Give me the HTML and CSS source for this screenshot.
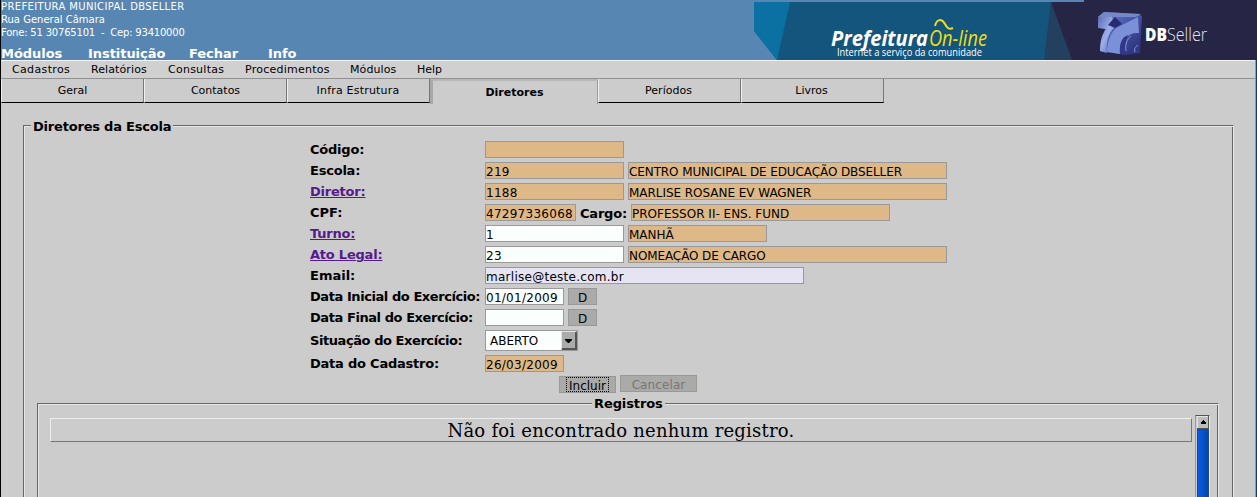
FILE: index.html
```html
<!DOCTYPE html>
<html lang="pt-BR">
<head>
<meta charset="utf-8">
<title>Diretores da Escola</title>
<link rel="stylesheet" href="styles.css">
</head>
<body>
<div class="page">
<header class="header">
  <div class="head-left">
    <div class="address"><div class="city">PREFEITURA MUNICIPAL DBSELLER</div><div class="rua">Rua General Câmara</div><div class="fone">Fone: 51 30765101 &nbsp;- &nbsp;Cep: 93410000</div></div>
    <nav class="main-nav"><span class="n1">Módulos</span><span class="n2">Instituição</span><span class="n3">Fechar</span><span class="n4">Info</span></nav>
  </div>
  <svg class="banner" width="503" height="60" viewBox="0 0 503 60">
    <defs>
      <linearGradient id="cube" x1="0" y1="0" x2="1" y2="1"><stop offset="0" stop-color="#6f7fc4"/><stop offset=".45" stop-color="#4759ad"/><stop offset="1" stop-color="#27296e"/></linearGradient>
      <linearGradient id="arm" x1="0" y1="0" x2="1" y2="1"><stop offset="0" stop-color="#5c6db8"/><stop offset=".5" stop-color="#9cafe8"/><stop offset="1" stop-color="#4458b4"/></linearGradient>
    </defs>
    <path fill="#14557d" d="M0 2H330V0H503V60H23L0 31Z"/>
    <path fill="#0b71a2" d="M0 2H36L23 60L0 31Z"/>
    <path fill="#24405f" d="M297 2L290 60H318Z"/>
    <path fill="#272546" d="M297 2H330V0H503V60H318Z"/>
    <text class="pref" x="77" y="46" textLength="97" lengthAdjust="spacingAndGlyphs">Prefeitura</text>
    <text class="online" x="175" y="46" textLength="58" lengthAdjust="spacingAndGlyphs">On-line</text>
    <path d="M181 26C183 18 188 19 191 24C193 28 195 30 199 28" fill="none" stroke="#f0df12" stroke-width="2"/>
    <text class="slogan" x="83" y="56" textLength="145" lengthAdjust="spacingAndGlyphs">Internet a serviço da comunidade</text>
    <path fill="url(#cube)" d="M344 17L350 12L384 14L388 16L386 53L372 55L346 51L351 29L344 27Z"/>
    <path fill="#7686c6" d="M350 12L387 14L382 17L344 17Z"/>
    <path fill="url(#arm)" d="M344 17H358L361 27C354 33 352 43 353 53L346 51C346 41 348 34 352 29L344 28Z"/>
    <path fill="#7c90d8" d="M368 25L384 17L385 33C374 32 367 40 366 54L353 52C353 42 356 34 362 28Z"/>
    <path fill="#282b70" d="M361 17L368 24L361 28L354 25Z"/>
    <path fill="#31388a" d="M366 54C365 43 368 37 374 35C372 40 371 45 372 55ZM377 54C377 49 380 44 385 43L386 53Z"/>
    <path d="M372 51C371 44 373 39 377 36M381 52C380 49 381 47 384 45" fill="none" stroke="#8799dc" stroke-width="1"/>
    <text class="db" x="391" y="41" textLength="22" lengthAdjust="spacingAndGlyphs">DB</text>
    <text class="seller" x="413" y="41" textLength="40" lengthAdjust="spacingAndGlyphs">Seller</text>
  </svg>
</header>
<nav class="menu"><span class="m1">Cadastros</span><span class="m2">Relatórios</span><span class="m3">Consultas</span><span class="m4">Procedimentos</span><span class="m5">Módulos</span><span class="m6">Help</span></nav>
<nav class="tabs"><a class="tab">Geral</a><a class="tab">Contatos</a><a class="tab infra">Infra Estrutura</a><a class="tab active">Diretores</a><a class="tab shift">Períodos</a><a class="tab shift">Livros</a></nav>
<section class="panel">
  <h2 class="legend main-legend">Diretores da Escola</h2>
  <div class="form">
    <div class="row"><b class="label">Código:</b><span class="field w139"></span></div>
    <div class="row"><b class="label">Escola:</b><span class="field w139 num">219</span><span class="field w319 escola">CENTRO MUNICIPAL DE EDUCAÇÃO DBSELLER</span></div>
    <div class="row"><b class="label"><a>Diretor:</a></b><span class="field w139 num">1188</span><span class="field w319 upper">MARLISE ROSANE EV WAGNER</span></div>
    <div class="row"><b class="label plain">CPF:</b><span class="field w91 num">47297336068</span><b class="cargo">Cargo:</b><span class="field w259">PROFESSOR II- ENS. FUND</span></div>
    <div class="row"><b class="label"><a>Turno:</a></b><span class="field w139 white num">1</span><span class="field w139">MANHÃ</span></div>
    <div class="row"><b class="label"><a>Ato Legal:</a></b><span class="field w139 white num">23</span><span class="field w319 escola">NOMEAÇÃO DE CARGO</span></div>
    <div class="row"><b class="label plain">Email:</b><span class="field w319 lilac num">marlise@teste.com.br</span></div>
    <div class="row"><b class="label tight">Data Inicial do Exercício:</b><span class="field w79 white num">01/01/2009</span><span class="btn day">D</span></div>
    <div class="row"><b class="label tight">Data Final do Exercício:</b><span class="field w79 white"></span><span class="btn day">D</span></div>
    <div class="row tall"><b class="label tight">Situação do Exercício:</b><span class="select"><span>ABERTO</span><svg width="16" height="19" viewBox="0 0 16 19"><path fill="#ababab" d="M0 0H16V19H0Z"/><path fill="#e5e5e5" d="M0 0H15V1H1V18H0Z"/><path fill="#555" d="M14 1H16V19H1V17H14Z"/><path d="M4 8H11V9L8 12H7L4 9Z"/></svg></span></div>
    <div class="row"><b class="label">Data do Cadastro:</b><span class="field w79 num">26/03/2009</span></div>
  </div>
  <div class="actions"><span class="btn include"><span>Incluir</span></span><span class="btn cancel">Cancelar</span></div>
  <section class="records">
    <h3 class="legend">Registros</h3>
    <div class="list"><div class="empty">Não foi encontrado nenhum registro.</div><div class="scroll"><svg width="12" height="13" viewBox="0 0 12 13"><path fill="#555" d="M0 0H12V13H0Z"/><path fill="#e2e2e2" d="M0 0H11V12H0Z"/><path fill="#bdbdbd" d="M1 1H11V12H1Z"/><path d="M6 4H7V5H8V6H9V8H4V6H5V5H6Z"/></svg><div class="thumb"></div></div></div>
  </section>
</section>
<div class="edge"></div>
</div>
</body>
</html>
```
FILE: styles.css
```css
* { box-sizing: border-box; }
body { margin: 0; overflow: hidden; background: #ccc; color: #000; font: 13px "DejaVu Sans", sans-serif; }
.page { position: relative; height: 497px; overflow: hidden; border-left: 1px solid #000; }
.header { display: flex; justify-content: space-between; height: 60px; margin-left: -1px; background: #5886b3; color: #fff; }
.head-left { width: 400px; padding-left: 1px; white-space: nowrap; }
.address { height: 46px; font-size: 10px; line-height: 13px; }
.city { letter-spacing: .36px; }
.fone { letter-spacing: -.2px; }
.main-nav { display: flex; font-size: 13px; font-weight: bold; line-height: 15px; }
.n1 { width: 87px; }
.n2 { width: 101px; }
.n3 { width: 79px; }
.n1, .n2, .n3, .n4 { letter-spacing: -.05px; }
.banner { display: block; }
.pref { font: italic bold 21px "Open Sans", sans-serif; fill: #fff; }
.online { font: italic 21px "Open Sans", sans-serif; fill: #f0df12; }
.slogan { font: 10px "Open Sans", sans-serif; fill: #fff; }
.db { font: 800 18px "Open Sans", sans-serif; fill: #fff; }
.seller { font: 300 18px "Open Sans", sans-serif; fill: #e6e6f2; }
.menu { display: flex; height: 19px; padding-left: 11px; background: #d0d0d0; border-top: 1px solid #f4f4f4; border-bottom: 1px solid #909090; font-size: 11px; line-height: 17px; white-space: nowrap; }
.m1 { width: 79px; letter-spacing: .35px; }
.m2 { width: 77px; letter-spacing: .1px; }
.m3 { width: 77px; letter-spacing: .25px; }
.m4 { width: 105px; letter-spacing: .25px; }
.m5 { width: 67px; letter-spacing: .1px; }
.tabs { display: flex; height: 25px; font-size: 11px; line-height: 23px; text-align: center; }
.tab { width: 143px; height: 24px; border-left: 1px solid #f0f0f0; border-right: 1px solid #777; border-bottom: 1px solid #000; }
.infra { padding-right: 1px; letter-spacing: .2px; }
.shift { padding-right: 2px; }
.tab.active { width: 168px; height: 25px; padding-right: 1px; border-left: 3px solid #a8a8a8; border-right: 1px solid #999; border-top: 2px solid #b7b7b7; border-bottom: 0; font-weight: bold; }
.panel { position: relative; width: 1211px; height: 400px; margin: 21px 0 0 22px; padding-top: 14px; border: 1px solid #666; border-right-color: #e6e6e6; box-shadow: inset 1px 1px #e6e6e6, inset -1px 0 #666; }
.legend { position: absolute; top: -8px; left: 8px; margin: 0; padding: 0 2px; background: #ccc; font-size: 13px; line-height: 18px; letter-spacing: -.1px; white-space: nowrap; }
.main-legend { left: 7px; letter-spacing: -.2px; }
.form { padding-left: 286px; }
.row { display: flex; gap: 4px; height: 21px; white-space: nowrap; }
.row.tall { height: 25px; }
.label { flex: 0 0 171px; min-width: 0; line-height: 20px; font-size: 13px; letter-spacing: -.22px; }
.label.plain { letter-spacing: 0; }
.label.tight { letter-spacing: -.43px; }
.tall .label { line-height: 23px; }
.label a { color: #551a8b; text-decoration: underline; }
.field { flex: none; height: 17px; margin-top: 1px; border: 1px solid #999; background: #deb887; font-size: 12px; line-height: 19px; white-space: nowrap; overflow: hidden; }
.num { letter-spacing: .27px; }
.escola { letter-spacing: -.1px; }
.upper { letter-spacing: -.04px; }
.white { background: #fafffd; }
.lilac { background: #e6e3f2; }
.w139 { width: 139px; }
.w319 { width: 319px; }
.w91 { width: 91px; }
.w259 { width: 259px; }
.w79 { width: 79px; }
.cargo { width: 47px; line-height: 21px; letter-spacing: -.2px; }
.btn { height: 17px; border: 1px solid #999; background: #aaaaa8; font-size: 12px; line-height: 19px; text-align: center; }
.day { width: 29px; margin-top: 1px; }
.select { display: flex; justify-content: space-between; width: 93px; height: 21px; margin-top: 1px; padding-left: 4px; border: 1px solid #999; background: #fafffd; font-size: 12px; line-height: 20px; }
.actions { display: flex; gap: 4px; height: 28px; padding-left: 535px; }
.include { width: 57px; margin-top: 1px; padding: 0 6px; }
.include span { display: block; height: 15px; border: 1px dotted #000; line-height: 17px; }
.cancel { width: 77px; color: #777; letter-spacing: .1px; }
.records { position: relative; width: 1182px; height: 130px; margin-left: 13px; border: 1px solid #666; border-right-color: #e6e6e6; box-shadow: inset 1px 1px #e6e6e6, inset -1px 0 #666; padding: 11px 8px 0 12px; }
.records .legend { left: 554px; top: -9px; }
.list { display: flex; gap: 3px; }
.empty { flex: none; width: 1142px; height: 24px; margin-top: 3px; border: 1px solid #777; border-top-color: #eee; border-left-color: #eee; font: 18px/23px "DejaVu Serif", serif; letter-spacing: .23px; text-align: center; }
.scroll { width: 15px; height: 120px; padding-left: 1px; border: 1px solid #555; border-left-color: #999; border-right-color: #eee; }
.scroll svg { display: block; }
.thumb { height: 105px; border: 1px solid #164a99; background: linear-gradient(90deg, #0a5be8, #0745a8); }
.edge { position: absolute; top: 60px; right: 0; width: 2px; height: 437px; border-left: 1px solid #999; background: #093f7e; }
```
